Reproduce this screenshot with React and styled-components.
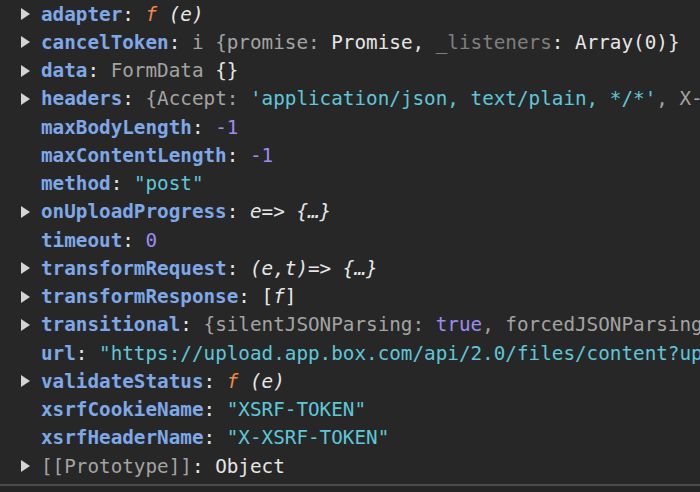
import styled, { createGlobalStyle, css } from 'styled-components'

const Global = createGlobalStyle`
  html, body { margin: 0; padding: 0; background: #272727; }
  #root { height: 100vh; }
`

const Console = styled.div`
  height: 100%;
  display: flex;
  flex-direction: column;
  background: #272727;
  overflow: hidden;
  font-family: "DejaVu Sans Mono", "Liberation Mono", monospace;
  font-size: 19.3px;
  color: #e3e3e3;
`

const Tree = styled.ul`
  list-style: none;
  margin: 0;
  padding: 0;
  height: 484px;
  flex: none;
`

const Row = styled.li`
  display: flex;
  align-items: center;
  height: 28.25px;
  white-space: pre;
`

const Toggle = styled.span`
  width: 41px;
  flex: none;
  display: flex;
  justify-content: flex-end;
  padding-right: 11px;
  box-sizing: border-box;
  &::before {
    content: '';
    display: ${p => (p.$open ? 'block' : 'none')};
    border-left: 9px solid #d4d4d4;
    border-top: 6px solid transparent;
    border-bottom: 6px solid transparent;
  }
`

const Key = styled.span`
  font-weight: bold;
  color: #7ea8e8;
`

const tones = {
  plain: '#e6e6e6',
  dim: '#a3a3a3',
  faint: '#7f7f7f',
  str: '#5ec7da',
  num: '#9c8cf2',
  fn: '#f08a4b',
}

const Val = styled.span`
  white-space: pre;
  color: ${p => tones[p.$t || 'plain']};
  ${p => p.$i && css`font-style: italic;`}
`

const Divider = styled.div`
  height: 2px;
  background: #4b4b4b;
  flex: none;
`

const Footer = styled.div`
  flex: 1;
  background: #252525;
`

const rows = [
  { k: 'adapter', open: true, v: [['fn', 'f', true], ['plain', ' (e)', true]] },
  {
    k: 'cancelToken', open: true, v: [
      ['dim', 'i {promise: '], ['plain', 'Promise, '], ['faint', '_listeners'], ['plain', ': Array(0)}'],
    ],
  },
  { k: 'data', open: true, v: [['dim', 'FormData '], ['plain', '{}']] },
  {
    k: 'headers', open: true, v: [
      ['dim', '{Accept: '], ['str', "'application/json, text/plain, */*'"], ['dim', ', X-']],
  },
  { k: 'maxBodyLength', v: [['num', '-1']] },
  { k: 'maxContentLength', v: [['num', '-1']] },
  { k: 'method', v: [['str', '"post"']] },
  { k: 'onUploadProgress', open: true, v: [['plain', 'e=> {…}', true]] },
  { k: 'timeout', v: [['num', '0']] },
  { k: 'transformRequest', open: true, v: [['plain', '(e,t)=> {…}', true]] },
  { k: 'transformResponse', open: true, v: [['plain', '['], ['plain', 'f', true], ['plain', ']']] },
  {
    k: 'transitional', open: true, v: [
      ['dim', '{silentJSONParsing: '], ['num', 'true'], ['dim', ', forcedJSONParsing']],
  },
  { k: 'url', v: [['str', '"https://upload.app.box.com/api/2.0/files/content?up']] },
  { k: 'validateStatus', open: true, v: [['fn', 'f', true], ['plain', ' (e)', true]] },
  { k: 'xsrfCookieName', v: [['str', '"XSRF-TOKEN"']] },
  { k: 'xsrfHeaderName', v: [['str', '"X-XSRF-TOKEN"']] },
]

export default function App() {
  return (
    <Console>
      <Global />
      <Tree>
        {rows.map(r => (
          <Row key={r.k}>
            <Toggle $open={r.open} />
            <Key>{r.k}</Key>
            <Val>{': '}</Val>
            {r.v.map(([t, text, it], i) => (
              <Val key={i} $t={t} $i={it}>{text}</Val>
            ))}
          </Row>
        ))}
        <Row>
          <Toggle $open />
          <Val $t="dim">[[Prototype]]</Val>
          <Val>: Object</Val>
        </Row>
      </Tree>
      <Divider />
      <Footer />
    </Console>
  )
}
